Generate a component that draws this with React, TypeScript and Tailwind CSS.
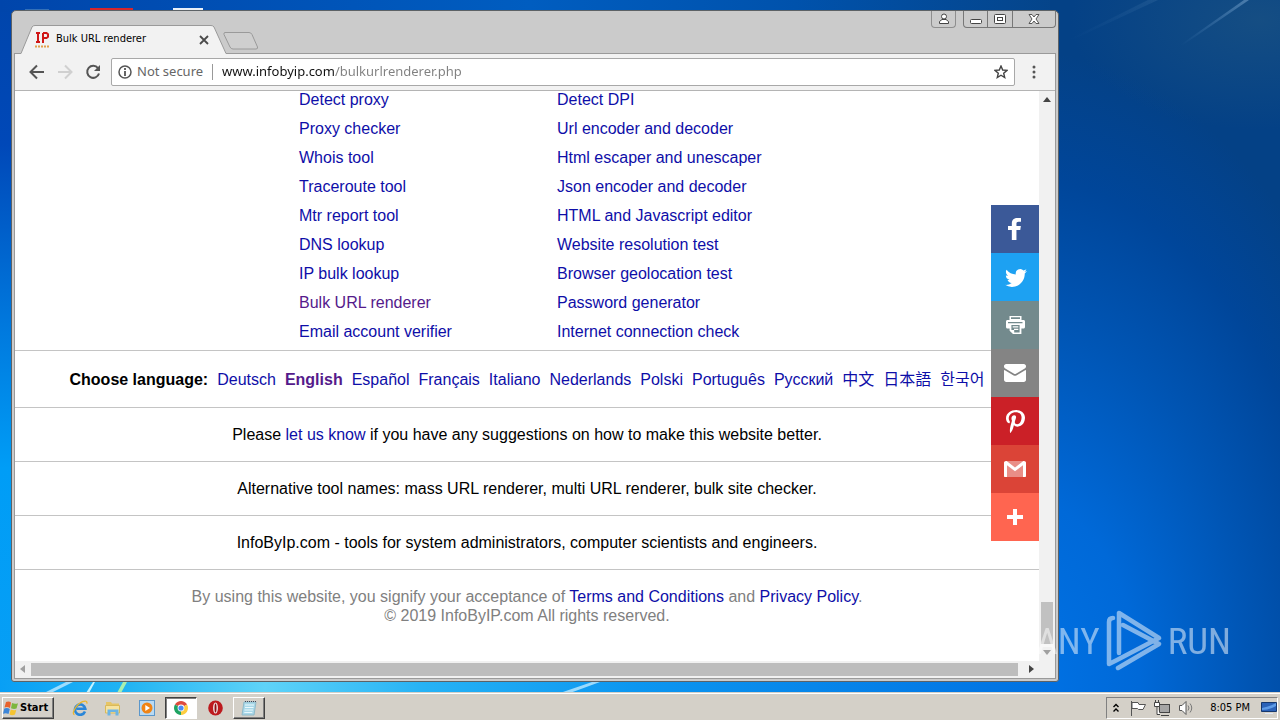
import type { ReactNode } from "react";

const body = "font-['Liberation_Sans','Noto_Sans_CJK_SC','Noto_Sans_CJK_KR',sans-serif]";

const tools: [string, string][] = [
  ["Detect proxy", "Detect DPI"],
  ["Proxy checker", "Url encoder and decoder"],
  ["Whois tool", "Html escaper and unescaper"],
  ["Traceroute tool", "Json encoder and decoder"],
  ["Mtr report tool", "HTML and Javascript editor"],
  ["DNS lookup", "Website resolution test"],
  ["IP bulk lookup", "Browser geolocation test"],
  ["Bulk URL renderer", "Password generator"],
  ["Email account verifier", "Internet connection check"],
];

const languages = [
  "Deutsch", "English", "Español", "Français", "Italiano", "Nederlands",
  "Polski", "Português", "Русский", "中文", "日本語", "한국어",
];

const shares: { name: string; color: string; icon: ReactNode }[] = [
  {
    name: "Facebook",
    color: "bg-[#3b5998]",
    icon: <path d="M22 5.16c-.406-.054-1.806-.16-3.43-.16-3.4 0-5.733 1.825-5.733 5.17v2.882H9v3.913h3.837V27h4.604V16.965h3.823l.587-3.913h-4.41v-2.5c0-1.123.347-1.903 2.198-1.903H22V5.16z" />,
  },
  {
    name: "Twitter",
    color: "bg-[#1da1f2]",
    icon: <path d="M27.996 10.116c-.81.36-1.68.602-2.592.71a4.526 4.526 0 0 0 1.984-2.496 9.037 9.037 0 0 1-2.866 1.095 4.513 4.513 0 0 0-7.69 4.116 12.81 12.81 0 0 1-9.3-4.715 4.49 4.49 0 0 0-.612 2.27 4.51 4.51 0 0 0 2.008 3.755 4.495 4.495 0 0 1-2.044-.564v.057a4.515 4.515 0 0 0 3.62 4.425 4.52 4.52 0 0 1-2.04.077 4.517 4.517 0 0 0 4.217 3.134 9.055 9.055 0 0 1-5.604 1.93A9.18 9.18 0 0 1 6 23.85a12.773 12.773 0 0 0 6.918 2.027c8.3 0 12.84-6.876 12.84-12.84 0-.195-.005-.39-.014-.583a9.172 9.172 0 0 0 2.252-2.336" />,
  },
  {
    name: "Print",
    color: "bg-[#738a8d]",
    icon: (
      <>
        <path fillRule="evenodd" d="M10.5 7h12v4h-12zM12 8.2v1.800h9V8.200z" />
        <path fillRule="evenodd" d="M8.500 11h16c.9 0 1.500.6 1.500 1.500v5.600c0 .9-.6 1.500-1.500 1.500h-2.100V25H14l-3.400-3.200v-2.200H8.500c-.9 0-1.500-.6-1.500-1.500v-5.600c0-.9.6-1.500 1.500-1.500zM9 13v1.200h14.500V13zM12.400 16v4.900h2.800v2.500h5.400V16z" />
        <path d="M13.700 17.200h5.600v1.300h-5.600zM15 19.700h4.300V21H15z" />
      </>
    ),
  },
  {
    name: "Email",
    color: "bg-[#848484]",
    icon: (
      <path d="M27 22.757c0 1.24-.988 2.243-2.19 2.243H7.19C5.98 25 5 23.994 5 22.757V13.67c0-.556.39-.773.855-.496l8.78 5.238c.782.467 1.95.467 2.73 0l8.78-5.238c.472-.28.855-.063.855.495v9.087zM27 9.243C27 8.006 26.02 7 24.81 7H7.19C5.988 7 5 8.004 5 9.243v.465c0 .554.385 1.232.857 1.514l9.61 5.733c.267.16.8.16 1.067 0l9.61-5.733c.473-.283.856-.96.856-1.514v-.465z" />
    ),
  },
  {
    name: "Pinterest",
    color: "bg-[#cb2027]",
    icon: <path d="M7 13.252c0 1.81.772 4.45 2.895 5.045.074.014.178.04.252.04.49 0 .772-1.27.772-1.63 0-.428-1.174-1.34-1.174-3.123 0-3.705 3.028-6.33 6.947-6.33 3.37 0 5.863 1.782 5.863 5.058 0 2.446-1.054 7.035-4.468 7.035-1.232 0-2.286-.83-2.286-2.018 0-1.742 1.307-3.43 1.307-5.225 0-1.092-.67-1.977-1.916-1.977-1.692 0-2.732 1.77-2.732 3.165 0 .774.104 1.63.476 2.336-.683 2.736-2.08 6.814-2.08 9.633 0 .87.135 1.728.224 2.6l.134.137.207-.07c2.494-3.178 2.405-3.8 3.533-7.96.61 1.077 2.182 1.658 3.43 1.658 5.254 0 7.614-4.77 7.614-9.067C26 7.987 21.755 5 17.094 5 12.017 5 7 8.15 7 13.252z" />,
  },
  {
    name: "Gmail",
    color: "bg-[#db4437]",
    icon: (
      <>
        <path fillOpacity=".4" d="M7 8h18v16H7z" />
        <path d="M5 9.8C5 8.7 5.900 8 7 8h.6L16 14.600 24.400 8H25c1.100 0 2 .7 2 1.800V23c0 .6-.4 1-1 1h-2V12.200l-8 6.100-8-6.100V24H6c-.6 0-1-.4-1-1z" />
      </>
    ),
  },
  { name: "More", color: "bg-[#ff6550]", icon: <path d="M18 14V8h-4v6H8v4h6v6h4v-6h6v-4h-6z" /> },
];

function Wallpaper() {
  return (
    <svg className="absolute inset-0 h-full w-full" viewBox="0 0 1280 720" preserveAspectRatio="none" aria-hidden="true">
      <defs>
        <linearGradient id="left" x1="0" y1="0" x2="0" y2="1">
          <stop offset="0" stopColor="#0045ab" />
          <stop offset=".2" stopColor="#0048b8" />
          <stop offset=".45" stopColor="#0078dd" />
          <stop offset=".65" stopColor="#009df6" />
          <stop offset="1" stopColor="#089ff5" />
        </linearGradient>
        <linearGradient id="top" x1="0" y1="0" x2="1" y2="0">
          <stop offset="0" stopColor="#0045ab" />
          <stop offset=".5" stopColor="#005dc0" />
          <stop offset=".75" stopColor="#0052ac" />
          <stop offset="1" stopColor="#054489" />
        </linearGradient>
        <linearGradient id="bottom" x1="0" y1="0" x2="1" y2="0">
          <stop offset="0" stopColor="#089ff5" />
          <stop offset=".12" stopColor="#22b4f3" />
          <stop offset=".25" stopColor="#5fd3f8" />
          <stop offset=".4" stopColor="#26b2f5" />
          <stop offset=".6" stopColor="#0c96f0" />
          <stop offset="1" stopColor="#0070e2" />
        </linearGradient>
        <radialGradient id="right" gradientUnits="userSpaceOnUse" cx="1020" cy="690" r="640" gradientTransform="translate(1020 690) scale(.62 1) translate(-1020 -690)">
          <stop offset="0" stopColor="#0073e6" />
          <stop offset=".3" stopColor="#0069d8" />
          <stop offset=".58" stopColor="#0055b4" />
          <stop offset=".8" stopColor="#00469a" />
          <stop offset="1" stopColor="#044186" />
        </radialGradient>
        <radialGradient id="haze">
          <stop offset="0" stopColor="#265a80" stopOpacity=".5" />
          <stop offset="1" stopColor="#265a80" stopOpacity="0" />
        </radialGradient>
        <linearGradient id="ray" x1="0" y1="1" x2="1" y2="0">
          <stop offset="0" stopColor="#5b8fc4" stopOpacity="0" />
          <stop offset="1" stopColor="#6f9cc6" stopOpacity=".6" />
        </linearGradient>
      </defs>
      <rect width="1040" height="720" fill="url(#left)" />
      <rect width="1060" height="12" fill="url(#top)" />
      <rect y="680" width="1060" height="14" fill="url(#bottom)" />
      <rect x="1050" width="230" height="720" fill="url(#right)" />
      <ellipse cx="1260" cy="20" rx="190" ry="110" fill="url(#haze)" />
      <path d="M1180 45 1244 0h5l-66 45z" fill="url(#ray)" />
      <path d="M1068 40 1148 0h10l-86 40z" fill="url(#ray)" opacity=".25" />
      <path d="M44 693 66 682h7l-22 11zM560 693l32-11h8l-30 11z" fill="#bfeaff" opacity=".8" />
      <path d="M86 693 93 682h2l-6 11z" fill="#c6f3ff" />
      <path d="M117 693 123 682h4l-6 11z" fill="#a8f0b0" />
      <path d="M25 9h24v2H25z" fill="#3470b8" />
      <path d="M90 8h43v3H90z" fill="#d8262c" />
      <path d="M173 8h30v3h-30z" fill="#e9f0f8" />
    </svg>
  );
}

function TitleBar() {
  return (
    <header className="flex h-[42px] items-end pr-[2px] pl-2">
      <div className="relative z-10 -mb-px flex h-[29px] w-[208px] shrink-0 items-center pr-[19px] pl-[14px]">
        <svg className="absolute inset-0" width="208" height="29" viewBox="0 0 208 29" aria-hidden="true">
          <path d="M0 28.500h1L12 2Q13 .5 15 .5h176q2 0 3 1.500l12 26.500h2v.5H0z" fill="#f2f2f2" />
          <path d="M0 28.500h1L12 2Q13 .5 15 .5h176q2 0 3 1.500l12 26.500h2" fill="none" stroke="#9a9a9a" />
        </svg>
        <svg className="relative shrink-0" width="16" height="18" viewBox="0 0 16 18" aria-hidden="true">
          <path d="M2 2h4M4 2v9M2 11h4M9 12V2M9 2h3.500L14 3.200v2.600L12.500 7H9" fill="none" stroke="#d01717" strokeWidth="2" />
          <path d="M1 15.500h14" stroke="#e2a04a" strokeWidth="2" strokeDasharray="2 1" />
        </svg>
        <h1 className="relative ml-[6px] flex-1 font-['DejaVu_Sans_Condensed','DejaVu_Sans',sans-serif] text-[11px] whitespace-nowrap text-black">Bulk URL renderer</h1>
        <button aria-label="Close tab" className="relative shrink-0">
          <svg width="10" height="10" viewBox="0 0 10 10"><path d="M1 1l8 8M9 1 1 9" stroke="#4a4a4a" strokeWidth="1.8" /></svg>
        </button>
      </div>
      <button aria-label="New tab" className="mb-[3px] -ml-[5px]">
        <svg width="36" height="18" viewBox="0 0 36 18">
          <path d="M2 .5h24q2 0 3 2l5.500 12.500q.5 2-1.500 2H10q-2 0-3-2L1 2.500Q.5.5 2 .5z" fill="#cfcfcf" stroke="#9a9a9a" />
        </svg>
      </button>
      <div className="ml-auto flex h-[17px] gap-[7px] self-start">
        <button aria-label="Profile" className="flex w-[25px] items-center justify-center rounded-b border border-t-0 border-[#8e8e8e]">
          <svg width="12" height="12" viewBox="0 0 12 12" fill="#fff" stroke="#444"><path d="M1.500 10.500v-2L4 6.500h4l2.500 2v2z" /><circle cx="6" cy="3.500" r="2.500" /></svg>
        </button>
        <div className="flex rounded-b border border-t-0 border-[#777]">
          <button aria-label="Minimize" className="flex w-6 items-center justify-center border-r border-[#777]">
            <svg width="12" height="12" viewBox="0 0 12 12"><rect x=".5" y="6.500" width="11" height="4" rx="1" fill="#fff" stroke="#444" /></svg>
          </button>
          <button aria-label="Maximize" className="flex w-[25px] items-center justify-center border-r border-[#777]">
            <svg width="12" height="12" viewBox="0 0 12 12" fill="#fff" stroke="#444"><rect x=".5" y="1.500" width="11" height="9" rx="1" /><rect x="3.500" y="4.500" width="5" height="3" /></svg>
          </button>
          <button aria-label="Close window" className="flex w-[42px] items-center justify-center">
            <svg width="12" height="12" viewBox="0 0 12 12"><path d="M1 1.500h3l2 2.500 2-2.500h3L8 6l3 4.500H8L6 8l-2 2.500H1L4 6z" fill="#fff" stroke="#555" /></svg>
          </button>
        </div>
      </div>
    </header>
  );
}

function Toolbar() {
  return (
    <nav className="flex h-[37px] shrink-0 items-center border-b border-[#b4b4b4] bg-[#f2f2f2] pr-[19px] pl-[14px]">
      <div className="flex gap-3">
        <button aria-label="Back">
          <svg width="16" height="16" viewBox="0 0 16 16" fill="none" stroke="#555" strokeWidth="2"><path d="M15 8H2M8 1.500 1.500 8 8 14.500" /></svg>
        </button>
        <button aria-label="Forward">
          <svg width="16" height="16" viewBox="0 0 16 16" fill="none" stroke="#d0d0d0" strokeWidth="2"><path d="M1 8h13M8 1.500 14.500 8 8 14.500" /></svg>
        </button>
        <button aria-label="Reload">
          <svg width="16" height="16" viewBox="0 0 16 16"><path d="M13 4.200A6 6 0 1 0 14 9.500" fill="none" stroke="#555" strokeWidth="2" /><path d="M15 1v6H9z" fill="#555" /></svg>
        </button>
      </div>
      <div className="ml-[10px] flex h-7 flex-1 items-center rounded-xs border border-[#a8a8a8] bg-white px-[6px] font-['Noto_Sans',sans-serif] text-[13px]">
        <svg width="14" height="14" viewBox="0 0 14 14" aria-hidden="true"><circle cx="7" cy="7" r="6" fill="none" stroke="#555" strokeWidth="1.500" /><path d="M7 3v2M7 6v5" stroke="#555" strokeWidth="1.800" /></svg>
        <label htmlFor="address" className="ml-[5px] whitespace-nowrap text-[#666]">Not secure</label>
        <span className="mr-[9px] ml-[9px] h-4 border-l border-[#999]" />
        <input
          id="address"
          defaultValue="www.infobyip.com/bulkurlrenderer.php"
          className="min-w-0 flex-1 bg-[linear-gradient(90deg,#111_113px,#808080_113px)] bg-clip-text text-transparent outline-none"
        />
        <button aria-label="Bookmark this page">
          <svg width="14" height="14" viewBox="0 0 14 14"><path d="M7 1l1.700 4 4.300.4-3.300 2.800 1 4.300L7 10.200l-3.700 2.300 1-4.300L1 5.400 5.300 5z" fill="none" stroke="#444" strokeWidth="1.400" /></svg>
        </button>
      </div>
      <button aria-label="Menu" className="ml-[17px]">
        <svg width="4" height="14" viewBox="0 0 4 14" fill="#555"><circle cx="2" cy="2" r="1.500" /><circle cx="2" cy="7" r="1.500" /><circle cx="2" cy="12" r="1.500" /></svg>
      </button>
    </nav>
  );
}

function Link({ children, visited = false }: { children: ReactNode; visited?: boolean }) {
  return <a href="#" className={visited ? "text-[#551a8b]" : "text-[#0e0ea8]"}>{children}</a>;
}

function Page() {
  return (
    <main className={`relative flex min-w-0 flex-1 flex-col justify-end overflow-hidden bg-white text-[16px] leading-[19px] text-black ${body}`}>
      <ul className="flex shrink-0 flex-col items-center pb-1 pl-[60px] leading-[29px]">
        {tools.map(([first, second]) => (
          <li key={first} className="grid grid-cols-[258px_258px]">
            <Link visited={first === "Bulk URL renderer"}>{first}</Link>
            <Link>{second}</Link>
          </li>
        ))}
      </ul>
      <div className="flex h-[57px] shrink-0 items-center justify-center gap-[9px] border-t border-[#c4c4c4] whitespace-nowrap">
        <b>Choose language:</b>
        {languages.map((name) =>
          name === "English" ? <b key={name}><Link visited>{name}</Link></b> : <Link key={name}>{name}</Link>,
        )}
      </div>
      <p className="shrink-0 border-t border-[#c4c4c4] py-[17px] text-center">
        Please <Link>let us know</Link> if you have any suggestions on how to make this website better.
      </p>
      <p className="shrink-0 border-t border-[#c4c4c4] py-[17px] text-center">
        Alternative tool names: mass URL renderer, multi URL renderer, bulk site checker.
      </p>
      <p className="shrink-0 border-t border-[#c4c4c4] py-[17px] text-center">
        InfoByIp.com - tools for system administrators, computer scientists and engineers.
      </p>
      <footer className="shrink-0 border-t border-[#c4c4c4] pt-[17px] pb-9 text-center text-[#808080]">
        <p>
          By using this website, you signify your acceptance of <Link>Terms and Conditions</Link> and <Link>Privacy Policy</Link>.
        </p>
        <p>© 2019 InfoByIP.com All rights reserved.</p>
      </footer>
      <aside className="absolute top-[114px] right-0 flex flex-col">
        {shares.map(({ name, color, icon }) => (
          <button key={name} aria-label={name} className={`flex size-12 items-center justify-center ${color}`}>
            <svg width="32" height="32" viewBox="0 0 32 32" fill="#fff">{icon}</svg>
          </button>
        ))}
      </aside>
    </main>
  );
}

function Arrow({ d, color }: { d: string; color: string }) {
  return <svg width="16" height="17" viewBox="0 0 16 17" aria-hidden="true"><path d={d} fill={color} /></svg>;
}

function BrowserWindow() {
  return (
    <section className="relative flex min-w-0 flex-1 flex-col rounded-t-[5px] rounded-b-[3px] border border-[#5d6266] bg-[#cbcbcb]">
      <TitleBar />
      <div className="mx-[2px] mb-[2px] flex min-h-0 flex-1 flex-col border border-[#9a9a9a]">
        <Toolbar />
        <div className="flex min-h-0 flex-1">
          <Page />
          <div className="flex w-4 flex-col justify-between bg-[#f1f1f1]">
            <Arrow d="M4 11h8L8 6z" color="#444" />
            <div className="flex flex-col">
              <div className="mx-[2px] h-[42px] bg-[#c1c1c1]" />
              <Arrow d="M4 6h8l-4 5z" color="#a0a0a0" />
            </div>
          </div>
        </div>
        <div className="flex h-[17px] shrink-0 bg-[#f1f1f1] pr-4">
          <Arrow d="M10 4v8L5 8z" color="#a0a0a0" />
          <div className="my-[2px] mr-[5px] flex-1 bg-[#bdbdbd]" />
          <Arrow d="M6 4v8l5-4z" color="#444" />
        </div>
      </div>
    </section>
  );
}

function Watermark() {
  const word = "font-['Roboto_Condensed','Open_Sans_Condensed','Liberation_Sans_Narrow','Noto_Sans',sans-serif] text-[37px] leading-none text-white";
  return (
    <div className="pointer-events-none absolute right-[49px] bottom-[20px] flex items-center gap-[6px] opacity-50">
      <span className={word}>ANY</span>
      <svg width="56" height="62" viewBox="0 0 56 62" fill="none" stroke="#fff" strokeWidth="4.500" strokeLinejoin="round" strokeLinecap="round" aria-hidden="true">
        <path d="M7 8q-4 0-4 4v42l8-4 42-22L13 3v40M17 15l36 19-41 24" />
      </svg>
      <span className={word}>RUN</span>
    </div>
  );
}

function Taskbar() {
  const raised = "border border-t-white border-l-white border-r-[#404040] border-b-[#404040] shadow-[inset_-1px_-1px_#808080]";
  return (
    <nav className="relative flex h-7 shrink-0 items-center border-t border-[#d4d0c8] bg-[#d4d0c8] pr-[2px] pl-[2px] font-['DejaVu_Sans_Condensed','DejaVu_Sans',sans-serif] text-[11px] text-black shadow-[inset_0_1px_#fff]">
      <button className={`mt-[2px] flex h-[22px] w-[52px] items-center gap-px pt-px font-bold ${raised}`}>
        <svg width="16" height="16" viewBox="0 0 16 16" aria-hidden="true">
          <path d="M3 2q3-1 5 .5L7 8Q4.500 6.500 1.500 7.500z" fill="#e8622c" />
          <path d="M9 3q3 1.500 6 .3L13.500 8.500Q11 9.500 8 8.300z" fill="#7cb63d" />
          <path d="M1.300 8.500q3-1 5.500.5L5.500 14Q3 12.700 0 13.700z" fill="#3d86d8" />
          <path d="M7.800 9.500q3 1.500 5.500.3L12 14.500q-3 1.300-5.500 0z" fill="#f5c431" />
        </svg>
        Start
      </button>
      <div className="mt-[2px] ml-[9px] flex items-center">
        <button aria-label="Internet Explorer" className="flex w-[34px] justify-center">
          <svg width="16" height="16" viewBox="0 0 16 16"><path d="M13 11.500A5.200 5.200 0 1 1 13.300 8.700H4.500" fill="none" stroke="#2a86d8" strokeWidth="2.600" /><path d="M2.500 14.500C-1 14 4 4.500 10.500 1.700c3-1.200 5-.7 4.300 2" fill="none" stroke="#e9b52c" strokeWidth="1.300" /></svg>
        </button>
        <button aria-label="File Explorer" className="flex w-8 justify-center">
          <svg width="16" height="16" viewBox="0 0 16 16"><path d="M1 4V2h5l1 1.500h7V8H1z" fill="#e6c565" /><path d="M.5 5.500h14V13H.5z" fill="#f6e3a0" stroke="#d9b95a" /><path d="M2.500 15.500V9.500h11v6h-3V12h-5v3.500z" fill="#6cb4e4" /></svg>
        </button>
        <button aria-label="Media Player" className="flex w-9 justify-center">
          <svg width="16" height="16" viewBox="0 0 16 16"><rect x=".5" y=".5" width="15" height="15" fill="#b9daf3" stroke="#5b97cb" /><circle cx="8" cy="8" r="5.500" fill="#f08415" /><path d="M6.300 5v6l4.700-3z" fill="#fff" /></svg>
        </button>
        <button aria-label="Chrome" className="flex h-[22px] w-8 items-center justify-center border border-t-[#404040] border-l-[#404040] border-r-white border-b-white bg-white shadow-[inset_1px_1px_#808080]">
          <svg width="14" height="14" viewBox="0 0 14 14"><path d="M7 7 .94 3.500A7 7 0 0 1 13.060 3.500z" fill="#dd4b3e" /><path d="M7 7 13.060 3.500A7 7 0 0 1 7 14z" fill="#fdcd3f" /><path d="M7 7v7A7 7 0 0 1 .94 3.500z" fill="#1ea362" /><circle cx="7" cy="7" r="3.400" fill="#fff" /><circle cx="7" cy="7" r="2.600" fill="#4a8af4" /></svg>
        </button>
        <button aria-label="Opera" className="flex w-9 justify-center">
          <svg width="15" height="16" viewBox="0 0 15 16"><ellipse cx="7.500" cy="8" rx="7.300" ry="7.500" fill="#bd1a1e" /><ellipse cx="7.500" cy="8" rx="2.400" ry="5.500" fill="#f4eeee" /><ellipse cx="7.500" cy="8" rx="1" ry="4.600" fill="#8e1014" /></svg>
        </button>
        <button aria-label="Notepad" className={`flex h-[22px] w-8 items-center justify-center ${raised}`}>
          <svg width="16" height="16" viewBox="0 0 16 16"><path d="M3 2h12l-2 13H1z" fill="#a9d8e8" stroke="#8fb9c8" /><path d="M4 5h9M4 7.500h8.500M3.500 10h8.500M3.300 12.500h8" stroke="#eaf8fc" /><path d="M4 1.500h11" stroke="#445" strokeDasharray="1 1" /></svg>
        </button>
      </div>
      <div className="mt-[2px] ml-auto flex h-[22px] items-center border border-t-[#808080] border-l-[#808080] border-r-white border-b-white pl-[5px]">
        <button aria-label="Show hidden icons">
          <svg width="8" height="10" viewBox="0 0 8 10" fill="none" stroke="#000" strokeWidth="1.400"><path d="M1.500 4 4 1.500 6.500 4M1.500 8.500 4 6l2.500 2.500" /></svg>
        </button>
        <svg className="ml-[10px]" width="16" height="16" viewBox="0 0 16 16" fill="#fff" stroke="#555"><path d="M1.500 1v15" /><path d="M2 2.500h6l1 2h6.500L13 9.500H8.500l-1-1H2z" /></svg>
        <svg className="ml-2" width="16" height="16" viewBox="0 0 16 16" fill="#fff" stroke="#444"><rect x="5.500" y="4.500" width="10" height="8" fill="#a5a5a5" /><path d="M7 15.500h8M.5 2.500h5v4h-5zM1.500 0v2M4.500 0v2M3 6.500v8h3" /></svg>
        <svg className="ml-2" width="16" height="16" viewBox="0 0 16 16" fill="#fff" stroke="#555"><path d="M1.500 5.500h2.500L8 1.500v13L4 10.500H1.500z" /><path d="M10 5.500q2 2.500 0 5M12 3.500q3.500 4.500 0 9" fill="none" stroke="#777" /></svg>
        <time className="ml-4 pt-px whitespace-nowrap">8:05 PM</time>
        <svg className="ml-[11px]" width="16" height="14" viewBox="0 0 16 14"><path d="M.5 1.500h15v9H.5z" fill="#2b62b8" stroke="#16386e" /><path d="M1 7q7-1 14-5v3Q8 9 1 9z" fill="#5e9be6" /><path d="M4 12.500h8" stroke="#dfe8f5" /></svg>
      </div>
    </nav>
  );
}

export default function App() {
  return (
    <div className="relative flex h-screen flex-col overflow-hidden bg-[#0062c8]">
      <Wallpaper />
      <div className="relative flex min-h-0 flex-1 pt-[10px] pr-[221px] pb-[10px] pl-[11px]">
        <BrowserWindow />
        <Watermark />
      </div>
      <Taskbar />
    </div>
  );
}
